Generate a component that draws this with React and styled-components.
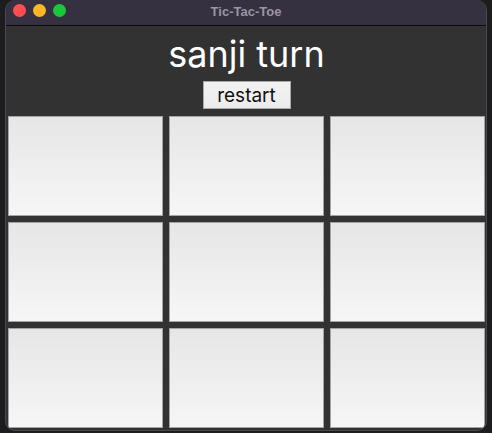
import React, { useState } from "react";
import styled, { createGlobalStyle } from "styled-components";

const GlobalStyle = createGlobalStyle`
  html, body {
    margin: 0;
    padding: 0;
    background-color: #1d1d1f;
    width: 492px;
    height: 433px;
    overflow: hidden;
  }
  * {
    box-sizing: border-box;
  }
`;

const Desktop = styled.div`
  width: 492px;
  height: 433px;
  padding-left: 5px;
  background-color: #1d1d1f;
`;

const Window = styled.div`
  width: 482px;
  height: 431px;
  display: flex;
  flex-direction: column;
  border: 1px solid #4a4950;
  border-top: none;
  border-radius: 10px;
  overflow: hidden;
  background-color: #323232;
`;

const TitleBar = styled.div`
  height: 26px;
  flex-shrink: 0;
  position: relative;
  display: flex;
  align-items: center;
  justify-content: center;
  background-color: #353140;
  border-bottom: 1px solid #0c0c0e;
`;

const Lights = styled.div`
  position: absolute;
  left: 7px;
  top: 4px;
  display: flex;
  gap: 7px;
`;

const Light = styled.span`
  width: 13px;
  height: 13px;
  border-radius: 50%;
  background-color: ${({ color }) => color};
`;

const Title = styled.span`
  font-family: "Liberation Sans", Arial, sans-serif;
  font-weight: 700;
  font-size: 13px;
  color: #9a96a3;
  margin-top: -2px;
`;

const Content = styled.div`
  flex: 1;
  display: flex;
  flex-direction: column;
  align-items: center;
  padding: 0 1px 0 2px;
`;

const Status = styled.h1`
  margin: 8px 0 0 0;
  font-family: Inter, "Noto Sans", sans-serif;
  font-weight: 400;
  font-size: 36px;
  line-height: 40px;
  color: #ffffff;
`;

const RestartButton = styled.button`
  margin-top: 7px;
  width: 88px;
  height: 28px;
  padding: 0;
  font-family: Inter, "Noto Sans", sans-serif;
  font-size: 19px;
  color: #111111;
  background: linear-gradient(#f2f2f2, #ececec);
  border: 1px solid #a9a9a9;
  border-radius: 0;
`;

const Board = styled.div`
  margin-top: 7px;
  width: 100%;
  display: grid;
  grid-template-columns: repeat(3, 1fr);
  grid-auto-rows: 100px;
  gap: 6px;
`;

const Cell = styled.button`
  padding: 0;
  border: 1px solid #a4a4a4;
  border-radius: 0;
  background: linear-gradient(#e6e6e6, #f6f6f6);
  font-family: Inter, "Noto Sans", sans-serif;
  font-size: 48px;
  color: #222;
`;

export default function App() {
  const [cells] = useState(Array(9).fill(""));

  return (
    <Desktop>
      <GlobalStyle />
      <Window>
        <TitleBar>
          <Lights>
            <Light color="#fe4f50" />
            <Light color="#fdb626" />
            <Light color="#1ac93b" />
          </Lights>
          <Title>Tic-Tac-Toe</Title>
        </TitleBar>
        <Content>
          <Status>sanji turn</Status>
          <RestartButton>restart</RestartButton>
          <Board>
            {cells.map((value, index) => (
              <Cell key={index}>{value}</Cell>
            ))}
          </Board>
        </Content>
      </Window>
    </Desktop>
  );
}
